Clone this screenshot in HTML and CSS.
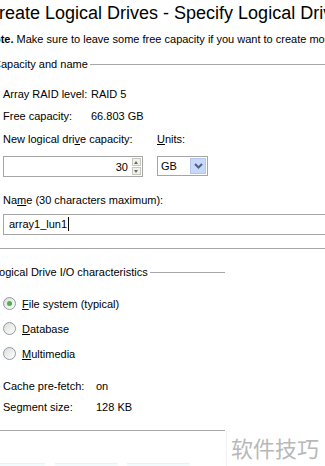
FILE: index.html
```html
<!DOCTYPE html>
<html>
<head>
<title>Create Logical Drives</title>
<link rel="stylesheet" href="styles.css">
</head>
<body>

<div class="head">
<h1>Create Logical Drives - Specify Logical Drives</h1>
<p class="note"><b>Note.</b> Make sure to leave some free capacity if you want to create more logical drives.</p>
</div>

<fieldset class="group first">
<legend>Capacity and name</legend>

<div class="info"><span class="lbl">Array RAID level:</span><span>RAID 5</span></div>
<div class="info"><span class="lbl">Free capacity:</span><span>66.803 GB</span></div>

<div class="capacity">
<div class="col">
<div class="caption">New logical dri<u>v</u>e capacity:</div>
<div class="spin">
<span class="num">30</span>
<span class="arrows"><i class="up"></i><i class="down"></i></span>
</div>
</div>
<div class="col">
<div class="caption"><u>U</u>nits:</div>
<div class="select">
<span class="num">GB</span>
<span class="drop"><svg width="9" height="6" viewBox="0 0 9 6"><path d="M1 1 L4.5 4.5 L8 1" fill="none" stroke="#4d6185" stroke-width="2"/></svg></span>
</div>
</div>
</div>

<div class="caption name">Na<u>m</u>e (30 characters maximum):</div>
<div class="textbox">array1_lun1<span class="caret"></span></div>
</fieldset>

<fieldset class="group second">
<legend>Logical Drive I/O characteristics</legend>

<div class="radio"><span class="dot on"></span><span><u>F</u>ile system (typical)</span></div>
<div class="radio"><span class="dot"></span><span><u>D</u>atabase</span></div>
<div class="radio"><span class="dot"></span><span><u>M</u>ultimedia</span></div>

<div class="info small"><span class="lbl wide">Cache pre-fetch:</span><span>on</span></div>
<div class="info small"><span class="lbl wide">Segment size:</span><span>128 KB</span></div>
</fieldset>

<div class="buttons">
<span class="btn b1"></span>
<span class="btn b2"></span>
<span class="btn b3"></span>
</div>

<div class="mark">软件技巧</div>

</body>
</html>
```

FILE: styles.css
```css
html, body{
margin:0;
background:#fff;
}

body{
width:325px;
height:466px;
overflow:hidden;
position:relative;
color:#000;
font-family:"Liberation Sans", Arial, sans-serif;
font-size:11px;
}

.head{
margin-left:-14px;
white-space:nowrap;
}

h1{
margin:1px 0 0 0;
font-size:18px;
font-weight:normal;
line-height:24px;
}

.note{
margin:8px 0 0 0;
line-height:13px;
}

.group{
margin:12px 0 0 0;
padding:12px 0 12px 3px;
border:none;
border-top:1px solid #a7a7a7;
border-bottom:1px solid #a7a7a7;
min-width:0;
width:340px;
}

.group legend{
margin-left:-10px;
padding:0 2px 0 0;
line-height:13px;
}

.first{
padding-bottom:13px;
}

.second{
margin-top:17px;
width:222px;
padding-top:12px;
padding-bottom:12px;
}

.info{
display:flex;
line-height:22px;
}

.info.small{
line-height:21px;
}

.lbl{
width:88px;
}

.lbl.wide{
width:93px;
}

.capacity{
display:flex;
margin-top:6px;
}

.col{
width:154px;
}

.caption{
line-height:13px;
}

.spin{
margin-top:10px;
width:138px;
height:19px;
border:1px solid #a5a5a5;
display:flex;
align-items:center;
justify-content:flex-end;
}

.spin .num{
padding-right:4px;
}

.arrows{
display:flex;
flex-direction:column;
gap:1px;
width:9px;
height:17px;
margin-right:1px;
}

.arrows i{
flex:1;
background:#f1f1ec;
border:1px solid #c7c7c0;
position:relative;
}

.arrows i::after{
content:"";
position:absolute;
left:1px;
top:2px;
border-left:2px solid transparent;
border-right:2px solid transparent;
}

.arrows .up::after{
border-bottom:3px solid #6a6a6a;
}

.arrows .down::after{
border-top:3px solid #6a6a6a;
}

.select{
margin-top:10px;
width:49px;
height:18px;
border:1px solid #a5a5a5;
display:flex;
align-items:center;
justify-content:space-between;
}

.select .num{
padding-left:3px;
}

.drop{
width:16px;
height:16px;
margin-right:1px;
background:#c8d8f8;
border:1px solid #b4c6ec;
box-sizing:border-box;
display:flex;
align-items:center;
justify-content:center;
}

.name{
margin-top:17px;
}

.textbox{
margin-top:7px;
width:340px;
border:1px solid #a5a5a5;
line-height:19px;
padding-left:5px;
box-sizing:border-box;
height:21px;
}

.caret{
display:inline-block;
width:1px;
height:14px;
background:#000;
vertical-align:-3px;
margin-left:1px;
}

.radio{
display:flex;
align-items:center;
height:25px;
gap:6px;
}

.dot{
width:11px;
height:11px;
border:1px solid #8f98a8;
border-radius:50%;
background:linear-gradient(135deg, #dcdcd6, #fff);
position:relative;
}

.dot.on::after{
content:"";
position:absolute;
left:3px;
top:3px;
width:5px;
height:5px;
border-radius:50%;
background:#4bb34b;
}

.radio + .info{
margin-top:10px;
}

.buttons{
display:flex;
margin-top:32px;
}

.btn{
height:4px;
border-top:1px solid #e4f3f8;
background:#f4fbfd;
}

.b1{
width:45px;
}

.b2{
width:63px;
margin-left:10px;
}

.b3{
width:63px;
margin-left:9px;
}

.mark{
position:absolute;
left:226px;
top:431px;
width:99px;
height:35px;
background:#fff;
color:#b8b8b8;
font-family:"Noto Sans CJK SC", sans-serif;
font-size:22px;
line-height:32px;
padding-left:4px;
box-sizing:border-box;
border-left:1px solid #f0f0f0;
}
```
